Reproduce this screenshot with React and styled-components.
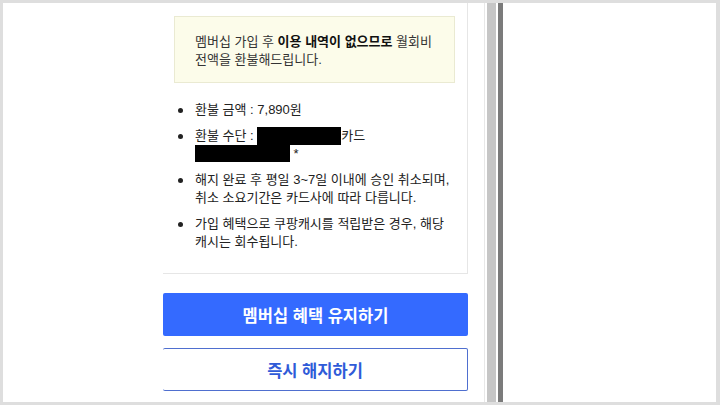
import React from 'react';
import styled, { createGlobalStyle } from 'styled-components';

const GlobalStyle = createGlobalStyle`
  html, body {
    margin: 0;
    padding: 0;
    background: #fff;
  }
  body {
    font-family: "Liberation Sans", "Noto Sans CJK KR", sans-serif;
    color: #222;
  }
`;

const Frame = styled.div`
  box-sizing: border-box;
  width: 720px;
  height: 405px;
  border: 3px solid #dedede;
  border-right-width: 4px;
  overflow: hidden;
  display: flex;
  padding-left: 160px;
`;

const Panel = styled.div`
  flex: none;
  width: 305px;
  display: flex;
  flex-direction: column;
`;

const Card = styled.div`
  border-right: 1px solid #e6e6e6;
  border-bottom: 1px solid #e6e6e6;
  padding: 13px 12px 22px 11px;
`;

const Notice = styled.div`
  background: #fcfcea;
  border: 1px solid #eaead2;
  padding: 16px 20px 13px;
  font-size: 13px;
  line-height: 18px;
  color: #333;

  strong {
    color: #111;
    font-weight: 700;
  }
`;

const List = styled.ul`
  list-style: none;
  margin: 18px 0 0;
  padding: 0;
  display: flex;
  flex-direction: column;
  gap: 8px;
`;

const Item = styled.li`
  display: flex;
  font-size: 13px;
  line-height: 18px;
  color: #222;
`;

const Dot = styled.span`
  flex: none;
  width: 5px;
  height: 5px;
  border-radius: 50%;
  background: #222;
  margin: 7px 12px 0 4px;
`;

const Redacted = styled.span`
  display: inline-block;
  vertical-align: top;
  width: ${p => p.$w}px;
  height: ${p => p.$h}px;
  background: #000;
`;

const Button = styled.button`
  box-sizing: border-box;
  display: block;
  width: 305px;
  height: 43px;
  margin-top: ${p => p.$gap}px;
  font-family: "Liberation Sans", "Noto Sans CJK KR", sans-serif;
  font-size: 16.5px;
  font-weight: 700;
  cursor: pointer;
  border-radius: 2px;
  ${p => (p.$primary
    ? 'background: #346aff; color: #fff; border: none;'
    : 'background: #fff; color: #2f5bd8; border: 1px solid #4f6fcf; border-left: none;')}
`;

const Divider = styled.div`
  flex: none;
  width: 1px;
  margin-left: 16px;
  background: #e8e8e8;
`;

const Track = styled.div`
  flex: none;
  width: 9px;
  margin-left: 2px;
  background: #c6c6c6;
`;

const Splitter = styled.div`
  flex: none;
  width: 5px;
  margin-left: 2px;
  background: #7b7b7b;
`;

const App = () => (
  <>
    <GlobalStyle />
    <Frame>
      <Panel>
        <Card>
          <Notice>
            멤버십 가입 후 <strong>이용 내역이 없으므로</strong> 월회비
            <br />
            전액을 환불해드립니다.
          </Notice>
          <List>
            <Item>
              <Dot />
              <span>환불 금액 : 7,890원</span>
            </Item>
            <Item>
              <Dot />
              <span>
                환불 수단 : <Redacted $w={84} $h={18} />카드
                <br />
                <Redacted $w={95} $h={17} /> *
              </span>
            </Item>
            <Item>
              <Dot />
              <span>
                해지 완료 후 평일 3~7일 이내에 승인 취소되며,
                <br />
                취소 소요기간은 카드사에 따라 다릅니다.
              </span>
            </Item>
            <Item>
              <Dot />
              <span>
                가입 혜택으로 쿠팡캐시를 적립받은 경우, 해당
                <br />
                캐시는 회수됩니다.
              </span>
            </Item>
          </List>
        </Card>
        <Button $primary $gap={19}>멤버십 혜택 유지하기</Button>
        <Button $gap={12}>즉시 해지하기</Button>
      </Panel>
      <Divider />
      <Track />
      <Splitter />
    </Frame>
  </>
);

export default App;
